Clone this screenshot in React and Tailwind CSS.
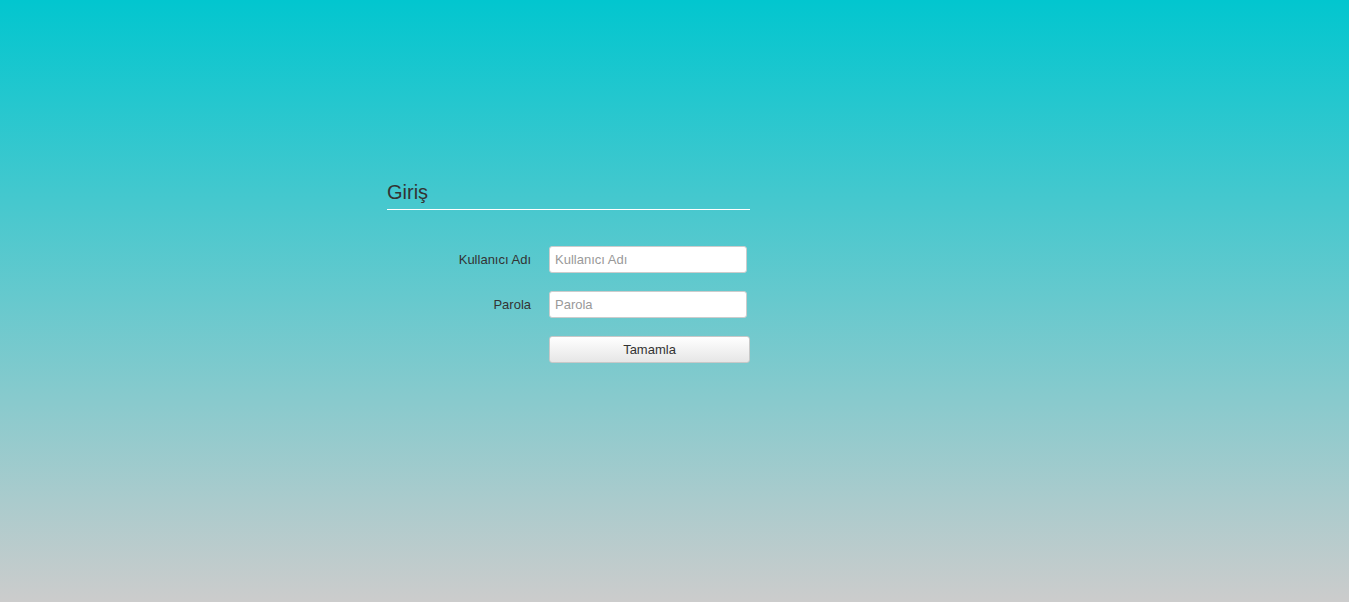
import React from "react";

const Field = ({ label, type }) => (
  <div className="flex items-center">
    <label className="w-[144px] text-right text-[13px] text-[#333]">{label}</label>
    <input
      type={type}
      placeholder={label}
      className="ml-[18px] h-[27px] w-[198px] rounded-[3px] border border-[#cccccc] bg-white px-[5px] text-[13px] text-[#333] placeholder:text-[#999] outline-none"
    />
  </div>
);

export default function App() {
  return (
    <div
      className="h-screen w-full bg-linear-to-b/srgb from-[#02c6cf] to-[#cccccc] overflow-hidden"
      style={{ fontFamily: '"Liberation Sans", Arial, sans-serif' }}
    >
      <div className="ml-[387px] w-[363px] pt-[178px]">
        <div className="border-b border-white pb-[3px]">
          <h1 className="text-[20px] leading-[28px] text-[#333]">Giriş</h1>
        </div>

        <form className="mt-[36px] flex flex-col gap-[18px]" onSubmit={(e) => e.preventDefault()}>
          <Field label="Kullanıcı Adı" type="text" />
          <Field label="Parola" type="password" />
          <div className="flex">
            <button
              type="submit"
              className="ml-[162px] h-[27px] w-[201px] rounded-[3px] border border-[#c8c8c8] bg-linear-to-b/srgb from-white to-[#e6e6e6] text-[13px] text-[#333]"
            >
              Tamamla
            </button>
          </div>
        </form>
      </div>
    </div>
  );
}
